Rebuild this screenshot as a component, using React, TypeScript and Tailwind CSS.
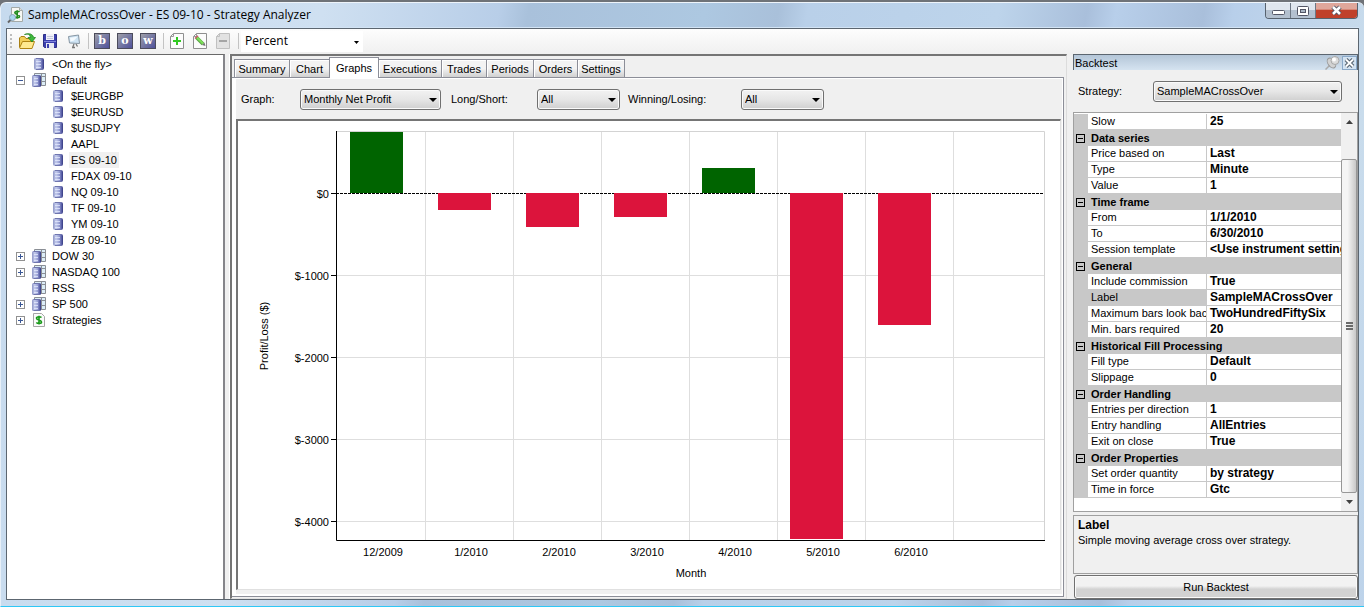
import { useState } from 'react'
import type { ReactNode } from 'react'

type TreeNode = {
  name: string
  icon: 'instrument' | 'list' | 'strategy'
  level: number
  toggle?: 'open' | 'closed'
}

const TREE: TreeNode[] = [
  { name: '<On the fly>', icon: 'instrument', level: 0 },
  { name: 'Default', icon: 'list', level: 0, toggle: 'open' },
  { name: '$EURGBP', icon: 'instrument', level: 1 },
  { name: '$EURUSD', icon: 'instrument', level: 1 },
  { name: '$USDJPY', icon: 'instrument', level: 1 },
  { name: 'AAPL', icon: 'instrument', level: 1 },
  { name: 'ES 09-10', icon: 'instrument', level: 1 },
  { name: 'FDAX 09-10', icon: 'instrument', level: 1 },
  { name: 'NQ 09-10', icon: 'instrument', level: 1 },
  { name: 'TF 09-10', icon: 'instrument', level: 1 },
  { name: 'YM 09-10', icon: 'instrument', level: 1 },
  { name: 'ZB 09-10', icon: 'instrument', level: 1 },
  { name: 'DOW 30', icon: 'list', level: 0, toggle: 'closed' },
  { name: 'NASDAQ 100', icon: 'list', level: 0, toggle: 'closed' },
  { name: 'RSS', icon: 'list', level: 0 },
  { name: 'SP 500', icon: 'list', level: 0, toggle: 'closed' },
  { name: 'Strategies', icon: 'strategy', level: 0, toggle: 'closed' },
]

const TABS = [
  { name: 'Summary', width: 'w-[56px]' },
  { name: 'Chart', width: 'w-[41px]' },
  { name: 'Graphs', width: 'w-[50px]' },
  { name: 'Executions', width: 'w-[64px]' },
  { name: 'Trades', width: 'w-[46px]' },
  { name: 'Periods', width: 'w-[48px]' },
  { name: 'Orders', width: 'w-[45px]' },
  { name: 'Settings', width: 'w-[48px]' },
]

const PROPERTIES: { group?: string; rows: [string, string][] }[] = [
  { rows: [['Slow', '25']] },
  {
    group: 'Data series',
    rows: [
      ['Price based on', 'Last'],
      ['Type', 'Minute'],
      ['Value', '1'],
    ],
  },
  {
    group: 'Time frame',
    rows: [
      ['From', '1/1/2010'],
      ['To', '6/30/2010'],
      ['Session template', '<Use instrument settings>'],
    ],
  },
  {
    group: 'General',
    rows: [
      ['Include commission', 'True'],
      ['Label', 'SampleMACrossOver'],
      ['Maximum bars look back', 'TwoHundredFiftySix'],
      ['Min. bars required', '20'],
    ],
  },
  {
    group: 'Historical Fill Processing',
    rows: [
      ['Fill type', 'Default'],
      ['Slippage', '0'],
    ],
  },
  {
    group: 'Order Handling',
    rows: [
      ['Entries per direction', '1'],
      ['Entry handling', 'AllEntries'],
      ['Exit on close', 'True'],
    ],
  },
  {
    group: 'Order Properties',
    rows: [
      ['Set order quantity', 'by strategy'],
      ['Time in force', 'Gtc'],
    ],
  },
]

// bar heights in chart units, positive is profit
const MONTHS = [
  { month: '12/2009', size: 61 },
  { month: '1/2010', size: -17 },
  { month: '2/2010', size: -34 },
  { month: '3/2010', size: -24 },
  { month: '4/2010', size: 25 },
  { month: '5/2010', size: -346 },
  { month: '6/2010', size: -132 },
]

function InstrumentIcon() {
  return (
    <svg width="10" height="12" viewBox="0 0 10 12" aria-hidden="true">
      <defs>
        <linearGradient id="cyl" x1="0" x2="1">
          <stop offset="0" stopColor="#8e96c6" />
          <stop offset="0.3" stopColor="#c3cbec" />
          <stop offset="0.6" stopColor="#9aa2d6" />
          <stop offset="0.85" stopColor="#5a60a8" />
          <stop offset="1" stopColor="#34397f" />
        </linearGradient>
      </defs>
      <path d="M0 2Q0 0 2 0H8Q10 0 10 2V10Q10 12 8 12H2Q0 12 0 10Z" fill="url(#cyl)" />
      <path d="M2 0.500H8M2 11.500H8" stroke="#6f75ae" />
      <path d="M2 3.500H7M2 6.500H7M2 9.500H7" stroke="#e6ebff" opacity="0.75" />
    </svg>
  )
}

function ListIcon() {
  return (
    <svg width="14" height="14" viewBox="0 0 14 14" aria-hidden="true">
      <path d="M2.500 0.500H13.500V12.500H2.500Z" fill="#dcedf7" stroke="#8a8e95" />
      <path d="M9.500 0V13M2 3.500H14M9 8.500H14" stroke="#8a8e95" />
      <rect x="0" y="2" width="9" height="12" rx="1.500" fill="url(#cyl)" />
      <path d="M1.500 2.500H8M1.500 13.500H8" stroke="#6f75ae" />
      <path d="M2 5.500H6M2 8.500H6M2 11.500H6" stroke="#e6ebff" opacity="0.75" />
    </svg>
  )
}

function StrategyIcon() {
  return (
    <svg width="12" height="14" viewBox="0 0 12 14" aria-hidden="true">
      <path d="M0.500 0.500H8.500L11.500 3.500V13.500H0.500Z" fill="#fafafa" stroke="#a5a5a5" />
      <path d="M8.500 4.500C7.500 3.500 3.500 3.300 3.500 5.200S8.500 7 8.500 9S4.500 10.700 3.300 9.500M6 2.800V11.400" fill="none" stroke="#189a18" strokeWidth="1.600" />
    </svg>
  )
}

function AppIcon() {
  return (
    <svg width="17" height="17" viewBox="0 0 17 17" aria-hidden="true">
      <path d="M4.500 0.500H12.500L15.500 3.500V14.500H4.500Z" fill="#f7f7f4" stroke="#a4aaa8" />
      <path d="M12.500 0.500V3.500H15.500" fill="#ddd" stroke="#a4aaa8" />
      <path d="M12.500 5C11.500 4 7.800 4 7.800 5.800S12.500 7.300 12.500 9.300S8.500 11 7.300 9.800M10.200 3.200V11.800" fill="none" stroke="#218c21" strokeWidth="1.600" />
      <path d="M1 15.500L4 12.500" stroke="#666" strokeWidth="2" />
      <circle cx="5.500" cy="10.500" r="3" fill="#a9d6f0" stroke="#8ba6bb" />
    </svg>
  )
}

function OpenIcon() {
  return (
    <svg width="17" height="16" viewBox="0 0 17 16" aria-hidden="true">
      <path d="M0.500 14V5L2 3.500H5.500L7 5.500H12.500V8" fill="#f2cf58" stroke="#a98015" />
      <path d="M0.500 15L3.500 8.500H15.500L13 15.500H1Z" fill="#ffe98f" stroke="#b08412" />
      <path d="M5.500 1.500Q10.500 -0.500 11.500 4.500H9L13 9L16.500 4.500H14.800Q13 -1 5.500 1.500Z" fill="#3db83c" stroke="#157d15" strokeWidth="0.700" />
    </svg>
  )
}

function SaveIcon() {
  return (
    <svg width="14" height="14" viewBox="0 0 14 14" aria-hidden="true">
      <path d="M0.500 0.500H13.500V13.500H1.500L0.500 12.500Z" fill="#3b3fae" stroke="#2c2f86" />
      <rect x="3" y="0" width="8" height="6" fill="#f0f1f8" />
      <path d="M4 2.500H10M4 4.500H10" stroke="#c3c6dc" />
      <path d="M1 7.500H13" stroke="#7d82db" />
      <rect x="3" y="9" width="8" height="5" fill="#e6e8f2" />
      <rect x="4" y="10" width="2" height="4" fill="#3b3fae" />
    </svg>
  )
}

function BoardIcon() {
  return (
    <svg width="14" height="15" viewBox="0 0 14 15" aria-hidden="true">
      <path d="M1.500 2.500L11.500 1L12.500 9.500L2.500 9Z" fill="#cfe4f4" stroke="#8796a3" />
      <path d="M3 3.800L10.500 2.800L7 6.500L3.500 7.500Z" fill="#f5fbff" />
      <path d="M7 10L5.500 14M9 10L10.500 12.500M5 13.500H8" fill="none" stroke="#777" strokeWidth="1.300" />
    </svg>
  )
}

function PageIcon({ sign }: { sign: 'plus' | 'pencil' | 'minus' }) {
  const off = sign === 'minus'
  return (
    <svg width="14" height="16" viewBox="0 0 14 16" aria-hidden="true">
      <path
        d="M3.500 0.500H13.500V15.500H0.500V3.500Z"
        fill={off ? '#e2e2e2' : '#fcfcfc'}
        stroke={off ? '#c0c0c0' : '#8f8f8f'}
      />
      <path d="M3.500 0.500V3.500H0.500" fill="none" stroke={off ? '#c0c0c0' : '#9b9b9b'} />
      {sign === 'plus' && <path d="M7 4V12M3 8H11" stroke="#32c923" strokeWidth="2" />}
      {sign === 'minus' && <path d="M3 8H11" stroke="#a5a5a5" strokeWidth="2" />}
      {sign === 'pencil' && (
        <>
          <path d="M3.500 4.500L10 11" stroke="#58a443" strokeWidth="3.600" />
          <path d="M3.700 4.300L10.200 10.800" stroke="#7ee05a" strokeWidth="2" />
          <path d="M11.500 9.500L12.500 13L9 12Z" fill="#777" />
          <path d="M2 5.500L5 2.700" stroke="#c65b64" strokeWidth="1.500" />
        </>
      )}
    </svg>
  )
}

function PinIcon() {
  return (
    <svg width="15" height="14" viewBox="0 0 15 14" aria-hidden="true">
      <path d="M0.500 13.500L5 9" stroke="#aaa" strokeWidth="1.500" />
      <ellipse cx="6.500" cy="7" rx="3.500" ry="5.500" transform="rotate(-35 6.500 7)" fill="#d2d2d2" stroke="#999" />
      <circle cx="10" cy="4.500" r="4" fill="#dcdcdc" stroke="#a8a8a8" />
      <circle cx="9" cy="3.500" r="2" fill="#fff" />
    </svg>
  )
}

function Letter({ children }: { children: ReactNode }) {
  return (
    <button className="mr-[7px] flex h-4 w-4 items-center justify-center border border-[#4c4c5c] bg-linear-to-br from-[#a0a0a8] to-[#50509a] font-['DejaVu_Serif',serif] text-[11px] leading-[14px] font-bold text-white">
      {children}
    </button>
  )
}

function Separator() {
  return <div className="h-4 w-px bg-[#c3c3c3]" />
}

function Select({ id, value, width }: { id: string; value: string; width: string }) {
  return (
    <div className={`relative shrink-0 ${width}`}>
      <select
        id={id}
        defaultValue={value}
        className="block h-[21px] w-full appearance-none rounded-[3px] border border-[#707070] bg-linear-to-b from-[#f2f2f2] via-[#e6e6e6] to-[#cfcfcf] pr-4 pl-[3px] shadow-[inset_0_0_0_1px_#fafafa]"
      >
        <option>{value}</option>
      </select>
      <svg className="pointer-events-none absolute top-[9px] right-1" width="8" height="4" viewBox="0 0 8 4" aria-hidden="true">
        <path d="M0 0H8L4 4Z" fill="#000" />
      </svg>
    </div>
  )
}

function TitleBar() {
  return (
    <header className="flex h-[25px] shrink-0 items-start border-b border-[#d3e4f5] pr-px pl-px">
      <div className="flex h-6 items-center gap-1">
        <AppIcon />
        <h1 className="font-['Open_Sans',sans-serif] text-[12px] leading-4 text-black">
          SampleMACrossOver - ES 09-10 - Strategy Analyzer
        </h1>
      </div>
      <div className="ml-auto flex h-4 overflow-hidden rounded-b-[4px] border border-t-0 border-[#57626e]">
        <button aria-label="Minimize" className="flex w-[25px] items-center justify-center border-r border-[#6d7784] bg-linear-to-b from-[#dfe6ee] from-45% to-[#b3c0cf] to-50%">
          <svg width="13" height="5" viewBox="0 0 13 5" className="mt-1">
            <rect x="0.500" y="0.500" width="12" height="4" rx="1" fill="#fff" stroke="#535666" />
          </svg>
        </button>
        <button aria-label="Maximize" className="flex w-[25px] items-center justify-center border-r border-[#6d7784] bg-linear-to-b from-[#dfe6ee] from-45% to-[#b3c0cf] to-50%">
          <svg width="12" height="10" viewBox="0 0 12 10">
            <rect x="0.500" y="0.500" width="11" height="9" rx="1" fill="#fff" stroke="#535666" />
            <rect x="3.500" y="3.500" width="5" height="3" fill="#aab6c4" stroke="#535666" />
          </svg>
        </button>
        <button aria-label="Close" className="flex w-[41px] items-center justify-center bg-linear-to-b from-[#e0a79b] from-40% to-[#c0402a] to-50%">
          <svg width="13" height="11" viewBox="0 0 13 11">
            <path d="M3 2L10 9M10 2L3 9" stroke="#535666" strokeWidth="4.500" />
            <path d="M3 2L10 9M10 2L3 9" stroke="#fff" strokeWidth="2.500" />
          </svg>
        </button>
      </div>
    </header>
  )
}

function Toolbar() {
  return (
    <div className="flex h-[25px] shrink-0 items-center bg-linear-to-b from-[#fdfdfd] to-[#f0f0f0] pb-px pl-[3px]">
      <div className="mr-[7px] grid gap-[2px]">
        <i className="h-[2px] w-[2px] bg-[#bdbdbd]" />
        <i className="h-[2px] w-[2px] bg-[#bdbdbd]" />
        <i className="h-[2px] w-[2px] bg-[#bdbdbd]" />
        <i className="h-[2px] w-[2px] bg-[#bdbdbd]" />
      </div>
      <button aria-label="Open" className="mr-[7px]"><OpenIcon /></button>
      <button aria-label="Save" className="mr-[10px]"><SaveIcon /></button>
      <button aria-label="Display" className="mr-[7px]"><BoardIcon /></button>
      <Separator />
      <div className="flex pl-[5px]">
        <Letter>b</Letter>
        <Letter>o</Letter>
        <Letter>w</Letter>
      </div>
      <Separator />
      <div className="flex gap-[9px] pr-2 pl-[6px]">
        <button aria-label="Add"><PageIcon sign="plus" /></button>
        <button aria-label="Edit"><PageIcon sign="pencil" /></button>
        <button aria-label="Remove" disabled><PageIcon sign="minus" /></button>
      </div>
      <Separator />
      <div className="relative ml-[2px] w-[122px]">
        <select
          aria-label="Display unit"
          defaultValue="Percent"
          className="block h-[21px] w-full appearance-none bg-white pl-1 font-['Open_Sans',sans-serif] text-[12px]"
        >
          <option>Percent</option>
        </select>
        <svg className="pointer-events-none absolute top-[10px] right-1" width="5" height="3" viewBox="0 0 5 3" aria-hidden="true">
          <path d="M0 0H5L2.500 3Z" fill="#000" />
        </svg>
      </div>
    </div>
  )
}

function Tree() {
  const [selected, setSelected] = useState('ES 09-10')
  return (
    <nav className="w-[218px] shrink-0 border-t border-r-2 border-t-[#696969] border-r-[#85858a] bg-white pt-px">
      <ul>
        {TREE.map((node) => (
          <li key={node.name} className={node.level ? 'flex h-4 items-center pl-[43px]' : 'flex h-4 items-center pl-[9px]'}>
            {node.level === 0 && (
              <span className="w-[15px]">
                {node.toggle && (
                  <button
                    aria-label={`Toggle ${node.name}`}
                    className="flex h-[9px] w-[9px] items-center justify-center border border-[#919191] bg-white"
                  >
                    <svg width="5" height="5" viewBox="0 0 5 5">
                      <path d={node.toggle === 'open' ? 'M0 2.500H5' : 'M0 2.500H5M2.500 0V5'} stroke="#3a5795" />
                    </svg>
                  </button>
                )}
              </span>
            )}
            <span className="flex w-4 justify-center">
              {node.icon === 'instrument' && <InstrumentIcon />}
              {node.icon === 'list' && <ListIcon />}
              {node.icon === 'strategy' && <StrategyIcon />}
            </span>
            <button
              onClick={() => setSelected(node.name)}
              className={`ml-[3px] h-4 px-[2px] ${selected === node.name ? 'bg-[#f0f0f0]' : ''}`}
            >
              {node.name}
            </button>
          </li>
        ))}
      </ul>
    </nav>
  )
}

function Chart() {
  return (
    <svg viewBox="0 0 822 468" className="block h-full w-full text-[11px]" role="img" aria-label="Monthly Net Profit">
      <path d="M99 10.500H806.500V419" fill="none" stroke="#d3d3d3" />
      {[187, 275, 363, 451, 539, 627, 715].map((x) => (
        <path key={x} d={`M${x + 0.5} 11V419`} stroke="#dedede" />
      ))}
      {[1, 2, 3, 4].map((n) => (
        <path key={n} d={`M99 ${n * 82 + 72.5}H806`} stroke="#dedede" />
      ))}
      <path d="M98 72.500H806" stroke="#000" strokeDasharray="3 1" />
      {MONTHS.map((bar, i) => (
        <rect
          key={bar.month}
          x={112 + i * 88}
          y={bar.size > 0 ? 72 - bar.size : 72}
          width="53"
          height={Math.abs(bar.size)}
          fill={bar.size > 0 ? '#006400' : '#dc143c'}
        />
      ))}
      <path d="M98.500 10V419.500H807" fill="none" stroke="#000" />
      {[0, 1, 2, 3, 4].map((n) => (
        <g key={n}>
          <path d={`M93 ${n * 82 + 72.5}H98`} stroke="#000" />
          <text x="91" y={n * 82 + 77} textAnchor="end">
            {n ? `$-${n}000` : '$0'}
          </text>
        </g>
      ))}
      {MONTHS.map((bar, i) => (
        <text key={bar.month} x={145 + i * 88} y="435" textAnchor="middle">
          {bar.month}
        </text>
      ))}
      <text x="453" y="456" textAnchor="middle">Month</text>
      <text transform="translate(30 215) rotate(-90)" textAnchor="middle">Profit/Loss ($)</text>
    </svg>
  )
}

function MainPanel() {
  const [tab, setTab] = useState('Graphs')
  return (
    <main className="flex min-w-0 flex-1 flex-col border-t-2 border-r border-b border-l-2 border-t-[#757575] border-r-[#dcdcdc] border-b-[#e3e3e3] border-l-[#757575]">
      <div role="tablist" className="flex h-[21px] shrink-0 items-end pl-[2px]">
        {TABS.map((t) => (
          <button
            key={t.name}
            role="tab"
            aria-selected={tab === t.name}
            onClick={() => setTab(t.name)}
            className={`${t.width} ${
              tab === t.name
                ? 'z-10 -mb-px h-[21px] bg-white pb-px'
                : 'h-[18px] bg-linear-to-b from-[#f3f3f3] from-50% to-[#d0d0d0] shadow-[inset_1px_1px_0_#fff]'
            } -mr-px shrink-0 border border-b-0 border-[#8c8e98] text-center`}
          >
            {t.name}
          </button>
        ))}
      </div>
      <div className="mr-[2px] mb-px flex min-h-0 flex-1 flex-col border-t border-r border-b border-[#8c8e98] bg-white pt-px pr-px pb-[2px] pl-1">
        <div className="flex min-h-0 flex-1 flex-col bg-[#f0f0f0] pr-px pb-1">
          <form className="flex h-10 shrink-0 items-center pl-[5px]">
            <label htmlFor="graph" className="w-[59px]">Graph:</label>
            <Select id="graph" value="Monthly Net Profit" width="w-[141px]" />
            <label htmlFor="side" className="ml-[10px] w-[86px]">Long/Short:</label>
            <Select id="side" value="All" width="w-[83px]" />
            <label htmlFor="result" className="ml-2 w-[113px]">Winning/Losing:</label>
            <Select id="result" value="All" width="w-[83px]" />
          </form>
          <div className="min-h-0 flex-1 border-t-2 border-r border-b border-l-2 border-t-[#757575] border-r-[#e0e0e0] border-b-[#e0e0e0] border-l-[#757575] bg-white">
            <Chart />
          </div>
        </div>
      </div>
    </main>
  )
}

function PropertyGrid() {
  return (
    <div className="flex min-h-0 flex-1 overflow-hidden border border-[#a0a0a0] bg-white">
      <div className="min-w-0 flex-1 pt-px">
        <table className="w-full table-fixed border-separate border-spacing-0">
          <colgroup>
            <col className="w-[14px]" />
            <col className="w-[119px]" />
            <col />
          </colgroup>
          {PROPERTIES.map((section) => (
            <tbody key={section.group ?? 'top'}>
              {section.group && (
                <tr className="h-4 bg-[#c8c8c8]">
                  <td className="p-0">
                    <button
                      aria-label={`Collapse ${section.group}`}
                      className="ml-[2px] flex h-[9px] w-[9px] items-center justify-center border border-black"
                    >
                      <span className="h-px w-[5px] bg-black" />
                    </button>
                  </td>
                  <th colSpan={2} className="p-0 pl-[3px] text-left leading-[15px] font-bold">
                    {section.group}
                  </th>
                </tr>
              )}
              {section.rows.map(([name, value]) => (
                <tr key={name} className="h-4">
                  <td className="bg-[#c8c8c8] p-0" />
                  <th
                    className={`overflow-hidden border-r border-b border-[#c8c8c8] p-0 pl-[3px] text-left leading-[15px] font-normal whitespace-nowrap ${
                      name === 'Label' ? 'bg-[#c8c8c8]' : ''
                    }`}
                  >
                    {name}
                  </th>
                  <td className="overflow-hidden border-b border-[#c8c8c8] p-0 pl-[3px] text-[12px] leading-[15px] font-bold whitespace-nowrap">
                    {value}
                  </td>
                </tr>
              ))}
            </tbody>
          ))}
        </table>
      </div>
      <div className="flex w-4 shrink-0 flex-col bg-[#f0f0f0]">
        <button aria-label="Scroll up" className="flex h-[46px] shrink-0 justify-center pt-[7px]">
          <svg width="7" height="4" viewBox="0 0 7 4"><path d="M0 4H7L3.500 0Z" fill="#404040" /></svg>
        </button>
        <div className="flex flex-1 items-center justify-center rounded-[2px] border border-[#979797] bg-linear-to-r from-[#f5f5f5] from-40% to-[#c8c8c8]">
          <div className="grid gap-px">
            <i className="h-[2px] w-[7px] bg-[#6b6b6b]" />
            <i className="h-[2px] w-[7px] bg-[#6b6b6b]" />
            <i className="h-[2px] w-[7px] bg-[#6b6b6b]" />
          </div>
        </div>
        <button aria-label="Scroll down" className="flex h-[18px] shrink-0 items-center justify-center">
          <svg width="7" height="4" viewBox="0 0 7 4"><path d="M0 0H7L3.500 4Z" fill="#404040" /></svg>
        </button>
      </div>
    </div>
  )
}

function BacktestPanel() {
  return (
    <aside className="ml-[6px] flex w-[285px] shrink-0 flex-col">
      <div className="flex h-4 shrink-0 items-center border border-b-0 border-[#5c6670] bg-linear-to-b from-[#b4c6d8] to-[#d5e3f0] pl-px">
        <h2>Backtest</h2>
        <button aria-label="Auto hide" className="ml-auto"><PinIcon /></button>
        <button aria-label="Close panel" className="ml-[2px] flex h-[14px] w-[15px] items-center justify-center border border-[#8aa9c9] bg-[#d3e3f2]">
          <svg width="11" height="10" viewBox="0 0 11 10">
            <path d="M2 1.500L9 8.500M9 1.500L2 8.500" stroke="#586572" strokeWidth="4" />
            <path d="M2 1.500L9 8.500M9 1.500L2 8.500" stroke="#fff" strokeWidth="1.800" />
          </svg>
        </button>
      </div>
      <div className="flex h-[42px] shrink-0 items-center pl-[5px]">
        <label htmlFor="strategy" className="w-[75px]">Strategy:</label>
        <Select id="strategy" value="SampleMACrossOver" width="w-[189px]" />
      </div>
      <PropertyGrid />
      <div className="mt-[3px] h-[59px] shrink-0 border border-[#a0a0a0] px-1 pt-[2px]">
        <h3 className="text-[12px] leading-[15px] font-bold">Label</h3>
        <p className="leading-[15px]">Simple moving average cross over strategy.</p>
      </div>
      <button className="mt-px ml-px h-6 shrink-0 rounded-[3px] border border-[#707070] bg-linear-to-b from-[#f2f2f2] from-45% to-[#d2d2d2] to-60% shadow-[inset_0_0_0_1px_#fafafa]">
        Run Backtest
      </button>
    </aside>
  )
}

export default function App() {
  return (
    <div className="h-screen overflow-hidden bg-[#6f7378] pt-[2px] font-['Liberation_Sans',Arial,sans-serif] text-[11px] leading-[14px] text-black">
      <div className="flex h-full flex-col rounded-t-[6px] border-t border-b border-l border-t-[#eef4fa] border-b-[#2fc7f5] border-l-[#e8f0f8] bg-[linear-gradient(100deg,#c6daee_0%,#cfe0f1_22%,#b8cee8_34%,#a9c1db_36%,#adc8e1_48%,#a9c0da_53%,#b9d0e9_55%,#bdd4eb_68%,#a9bfdb_74%,#b8cfea_76%,#a9bfdb_82%,#b8cfea_84%,#c9dcec_94%,#bdd3ea_100%)] pr-[5px] pb-[6px] pl-[5px]">
        <TitleBar />
        <div className="flex min-h-0 flex-1 flex-col border border-[#5c6670] bg-[#f0f0f0]">
          <Toolbar />
          <div className="flex min-h-0 flex-1">
            <Tree />
            <div className="w-[5px] shrink-0 border-r border-white" />
            <MainPanel />
            <BacktestPanel />
          </div>
        </div>
      </div>
    </div>
  )
}
